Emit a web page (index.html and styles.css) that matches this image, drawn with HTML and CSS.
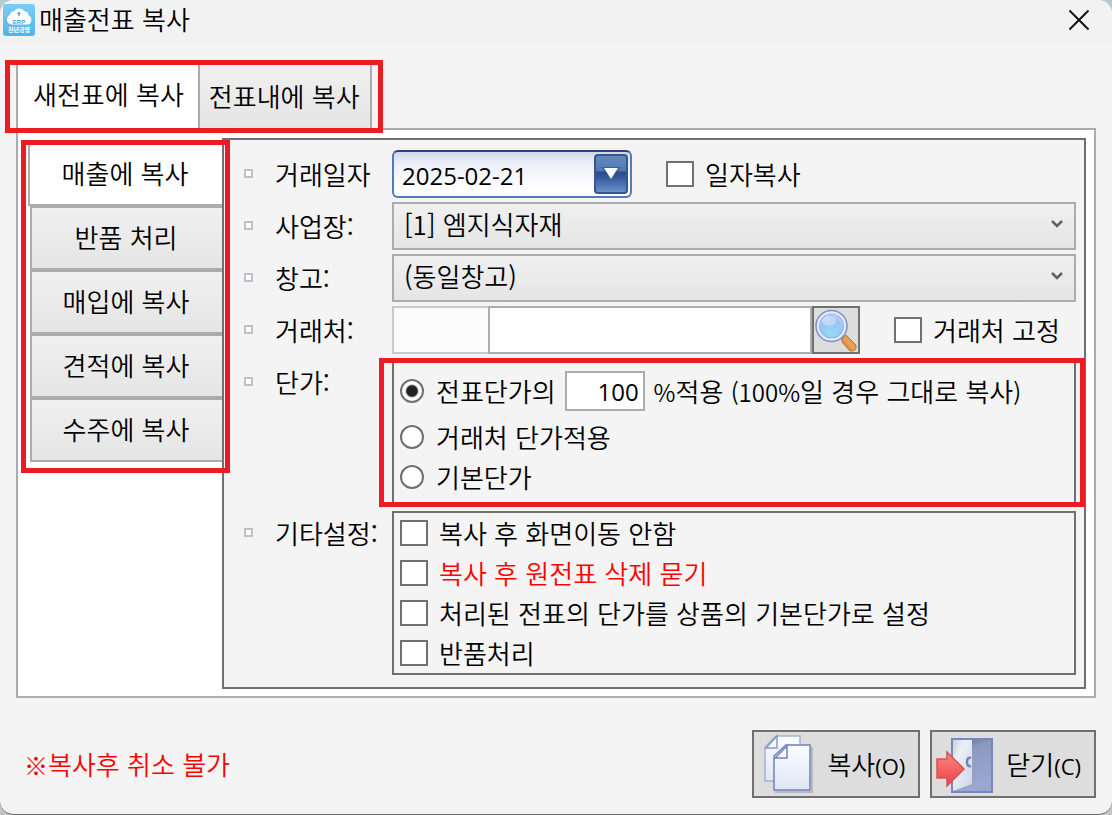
FILE: index.html
```html
<!DOCTYPE html>
<html lang="ko">
<head>
<meta charset="utf-8">
<title>매출전표 복사</title>
<link rel="stylesheet" href="styles.css">
</head>
<body>
<main class="window">
  <header class="titlebar">
    <svg class="app-icon" viewBox="0 0 32 32" aria-hidden="true">
      <defs>
        <linearGradient id="sky" x1="0" y1="0" x2="0" y2="1"><stop offset="0" stop-color="#7ccdf5"/><stop offset="1" stop-color="#55b2e8"/></linearGradient>
      </defs>
      <rect width="32" height="32" rx="3" fill="url(#sky)"/>
      <path d="M8 20.500a5 5 0 0 1-1-9.500 3.500 3.500 0 0 1 4-3.500 6 6 0 0 1 10.500 0 4 4 0 0 1 4 4 4.800 4.800 0 0 1-.5 9z" fill="#fff"/>
      <path d="M16 7.500l2 2.500h-1.300v2h-1.400v-2H14z" fill="#4a9ed6"/>
      <text x="16" y="19.500" class="logo-erp">ERP</text>
      <text x="16" y="27.500" class="logo-name">천년경영</text>
    </svg>
    <h1 class="title">매출전표 복사</h1>
    <button class="close" type="button" aria-label="닫기">
      <svg width="22" height="22" viewBox="0 0 22 22"><path d="M1.500 1.500l19 19M20.500 1.500l-19 19" stroke="#111" stroke-width="2" fill="none"/></svg>
    </button>
  </header>

  <div class="tabs marked" role="tablist">
    <button class="tab tab-active" type="button" role="tab" aria-selected="true">새전표에 복사</button>
    <button class="tab" type="button" role="tab" aria-selected="false">전표내에 복사</button>
  </div>

  <section class="panel">
    <div class="side">
      <div class="side-tabs marked" role="tablist">
        <button class="side-tab side-active" type="button" role="tab" aria-selected="true">매출에 복사</button>
        <button class="side-tab" type="button" role="tab" aria-selected="false">반품 처리</button>
        <button class="side-tab" type="button" role="tab" aria-selected="false">매입에 복사</button>
        <button class="side-tab" type="button" role="tab" aria-selected="false">견적에 복사</button>
        <button class="side-tab" type="button" role="tab" aria-selected="false">수주에 복사</button>
      </div>
    </div>

    <form class="form">
      <div class="row">
        <label class="name" for="date">거래일자</label>
        <div class="field">
          <div class="date">
            <input id="date" class="date-input" type="text" value="2025-02-21">
            <button class="date-button" type="button" aria-label="달력">
              <svg width="20" height="14" viewBox="0 0 20 14"><path d="M0 1h20l-4 5H4z" fill="#2f5596" opacity=".7"/><path d="M3 2h14l-7 11z" fill="#fff"/></svg>
            </button>
          </div>
          <label class="option date-copy"><input class="check" type="checkbox">일자복사</label>
        </div>
      </div>
      <div class="row">
        <label class="name" for="site">사업장:</label>
        <div class="field"><select id="site" class="select"><option>[1] 엠지식자재</option></select></div>
      </div>
      <div class="row">
        <label class="name" for="store">창고:</label>
        <div class="field"><select id="store" class="select"><option>(동일창고)</option></select></div>
      </div>
      <div class="row">
        <label class="name" for="client">거래처:</label>
        <div class="field">
          <input class="code" type="text" aria-label="거래처 코드" disabled>
          <input id="client" class="client" type="text">
          <button class="search" type="button" aria-label="거래처 찾기">
            <svg width="44" height="44" viewBox="0 0 44 44">
              <defs>
                <radialGradient id="glass" cx=".5" cy=".75" r=".75"><stop offset="0" stop-color="#8edcf8"/><stop offset=".6" stop-color="#9fc2f3"/><stop offset="1" stop-color="#c9d9f8"/></radialGradient>
                <linearGradient id="handle" x1="0" y1="1" x2="1" y2="0"><stop offset="0" stop-color="#a8622c"/><stop offset=".5" stop-color="#efa552"/><stop offset="1" stop-color="#c57a38"/></linearGradient>
              </defs>
              <path d="M26 27l4 4" stroke="#8d98b5" stroke-width="4"/>
              <path d="M28 31l4-4 10 10v4l-3 2h-3l-8-9z" fill="url(#handle)" stroke="#b57a45"/>
              <circle cx="17.500" cy="18" r="14" fill="url(#glass)" stroke="#7d93c6" stroke-width="4.500"/>
              <circle cx="17.500" cy="18" r="13.500" fill="none" stroke="#dfe9fb" stroke-width="2.500"/>
              <ellipse cx="15" cy="13" rx="7" ry="4.500" fill="#fff" opacity=".35"/>
            </svg>
          </button>
          <label class="option client-fix"><input class="check" type="checkbox">거래처 고정</label>
        </div>
      </div>
      <div class="row">
        <span class="name" id="price-name">단가:</span>
        <div class="group price marked" role="radiogroup" aria-labelledby="price-name">
          <div class="option percent-line">
            <label class="option"><input class="radio" type="radio" name="price" checked>전표단가의</label>
            <input id="percent" class="percent" type="text" value="100">
            <label for="percent"><span class="latin">%</span>적용 <span class="latin">(100%</span>일 경우 그대로 복사<span class="latin">)</span></label>
          </div>
          <label class="option"><input class="radio" type="radio" name="price">거래처 단가적용</label>
          <label class="option"><input class="radio" type="radio" name="price">기본단가</label>
        </div>
      </div>
      <div class="row row-etc">
        <span class="name" id="etc-name">기타설정:</span>
        <div class="group etc" role="group" aria-labelledby="etc-name">
          <label class="option"><input class="check" type="checkbox">복사 후 화면이동 안함</label>
          <label class="option warn"><input class="check" type="checkbox">복사 후 원전표 삭제 묻기</label>
          <label class="option"><input class="check" type="checkbox">처리된 전표의 단가를 상품의 기본단가로 설정</label>
          <label class="option"><input class="check" type="checkbox">반품처리</label>
        </div>
      </div>
    </form>
  </section>

  <footer class="footer">
    <p class="notice warn"><span class="mark">※</span>복사후 취소 불가</p>
    <button class="action copy" type="button">
      <svg width="52" height="60" viewBox="0 0 52 60" aria-hidden="true">
        <defs><linearGradient id="paper" x1="0" y1="0" x2="0" y2="1"><stop offset="0" stop-color="#fafcff"/><stop offset="1" stop-color="#dfe7f5"/></linearGradient></defs>
        <path d="M13 2h24v45H2V13z" fill="url(#paper)" stroke="#a5b1d0" stroke-width="1.500"/>
        <path d="M14 2v12H3z" fill="#f4f7fd" stroke="#8798c4" stroke-width="1.500"/>
        <path d="M12 58h37V13" fill="none" stroke="#b6b9c2" stroke-width="2"/>
        <path d="M23 11h24v45H11V22z" fill="url(#paper)" stroke="#7181b3" stroke-width="1.500"/>
        <path d="M24 12v12H12z" fill="#f4f7fd" stroke="#7184bb" stroke-width="1.500"/>
      </svg>
      <span>복사<span class="key">(O)</span></span>
    </button>
    <button class="action quit" type="button">
      <svg width="58" height="60" viewBox="0 0 58 60" aria-hidden="true">
        <defs>
          <linearGradient id="hall" x1="0" y1="0" x2=".3" y2="1"><stop offset="0" stop-color="#55617f"/><stop offset=".3" stop-color="#8c99bf"/><stop offset="1" stop-color="#9aa7cf"/></linearGradient>
          <linearGradient id="leaf" x1="0" y1="0" x2="1" y2="1"><stop offset="0" stop-color="#c9cedb"/><stop offset=".3" stop-color="#edf0f6"/><stop offset="1" stop-color="#cdd4e6"/></linearGradient>
          <linearGradient id="arrow" x1="0" y1="0" x2="0" y2="1"><stop offset="0" stop-color="#ff8585"/><stop offset="1" stop-color="#e64444"/></linearGradient>
        </defs>
        <path d="M17 5h40v53H17z" fill="url(#hall)" stroke="#7689bc" stroke-width="2"/>
        <path d="M18 6h19v44l-19 7z" fill="url(#leaf)"/>
        <path d="M36 24q-4-1-4 4t4 4" fill="none" stroke="#7286be" stroke-width="2.500"/>
        <path d="M2 25h10v-7l17 17-17 17v-8H2z" fill="url(#arrow)" stroke="#d85252" stroke-width="1.500"/>
      </svg>
      <span>닫기<span class="key">(C)</span></span>
    </button>
  </footer>
</main>
</body>
</html>
```
FILE: styles.css
```css
*,
*::before,
*::after {
  box-sizing: border-box;
}

body {
  margin: 0;
  background: linear-gradient(#b4cbd0, #c4c4c4);
  color: #000;
  font: 350 26px/40px "Noto Sans CJK KR", sans-serif;
}

button,
input,
select {
  margin: 0;
  padding: 0;
  border-radius: 0;
  color: inherit;
  font: inherit;
}

.window {
  display: flex;
  flex-direction: column;
  min-height: 100vh;
  overflow: hidden;
  border-bottom: 1px solid #6a6a6a;
  border-radius: 14px;
  background: #f4f4f4;
}

.titlebar {
  display: flex;
  align-items: center;
  height: 44px;
  padding: 0 22px 4px 3px;
  background: #f2f2f2;
}

.app-icon {
  width: 32px;
  height: 32px;
}

.logo-erp,
.logo-name {
  fill: #4a9ed6;
  font: 700 6px "Liberation Sans", sans-serif;
  text-anchor: middle;
}

.logo-name {
  fill: #fff;
  font: 700 6px "Noto Sans CJK KR", sans-serif;
}

.title {
  flex: 1;
  margin: 0 0 0 4px;
  padding-bottom: 2px;
  font: inherit;
}

.close {
  display: flex;
  border: 0;
  background: none;
}

/* Red callout frame drawn over a part of the window */
.marked {
  position: relative;
}

.marked::after {
  position: absolute;
  border: 5px solid #ed1c24;
  content: "";
  pointer-events: none;
}

.tabs {
  display: flex;
  align-self: flex-start;
  height: 66px;
  margin: 18px 0 0 16px;
}

.tabs::after {
  inset: -2px -11px -5px -11px;
}

.tab {
  padding: 0 10px 0 9px;
  border: 2px solid #acacac;
  border-width: 2px 2px 0 0;
  background: linear-gradient(#f0f0f0, #e5e5e5);
}

.tab-active {
  padding: 0 14px 4px 15px;
  border-left-width: 2px;
  background: #fff;
}

.panel {
  display: grid;
  grid-template-columns: 204px 1fr;
  margin: 0 16px;
  padding: 8px 8px 7px 0;
  border: 2px solid #acacac;
  background: #fff;
}

.side-tabs {
  display: flex;
  flex-direction: column;
  margin: 4px 0 0 10px;
}

.side-tabs::after {
  inset: -2px -8px -11px -7px;
}

.side-tab {
  height: 64px;
  margin-left: 2px;
  padding: 0 2px 2px 0;
  border: 2px solid #acacac;
  border-right: 0;
  background: linear-gradient(#f0f0f0, #e5e5e5);
}

.side-active {
  margin-left: 0;
  background: #fff;
}

.form {
  display: flex;
  flex-direction: column;
  gap: 4px;
  padding: 10px 8px 12px 20px;
  border: 2px solid #707070;
  background: #f4f4f4;
}

.row {
  display: grid;
  grid-template-columns: 148px 1fr;
  align-items: start;
}

.name {
  display: flex;
  align-items: center;
  gap: 22px;
  height: 48px;
  padding-bottom: 1px;
}

.name::before {
  width: 9px;
  height: 9px;
  border: 2px solid #bfc1c8;
  background: #fff;
  content: "";
}

.field {
  display: flex;
  height: 48px;
}

.option {
  display: flex;
  align-items: center;
  gap: 11px;
}

.date {
  display: flex;
  width: 240px;
  padding: 2px;
  border: 2px solid #5478b8;
  border-top-color: #2b4376;
  border-radius: 6px;
  background: linear-gradient(#cfd6e6, #eceff6 25%, #fff 85%);
}

.date-input {
  flex: 1;
  min-width: 0;
  padding: 2px 0 0 6px;
  border: 0;
  background: none;
  font: 24px "Open Sans", sans-serif;
}

.date-button {
  display: flex;
  justify-content: center;
  width: 34px;
  padding-top: 10px;
  border: 2px solid #355791;
  border-radius: 4px;
  background: linear-gradient(#6388bf, #5379b5 40%, #2c4c87 45%, #37599a 60%, #6b90cb);
}

.date-copy {
  margin-left: 34px;
}

.select {
  flex: 1;
  min-width: 0;
  padding: 0 32px 4px 10px;
  border: 2px solid #acacac;
  appearance: none;
  background:
    url("data:image/svg+xml,%3Csvg xmlns='http://www.w3.org/2000/svg' width='12' height='10'%3E%3Cpath d='M1 2l5 5 5-5' fill='none' stroke='%23606060' stroke-width='2.500'/%3E%3C/svg%3E") no-repeat right 11px top 15px,
    linear-gradient(#f0f0f0, #e5e5e5);
}

.code {
  width: 96px;
  border: 2px solid #c9cad0;
  border-right: 0;
  background: #fbfbfb;
}

.client {
  flex: 1;
  min-width: 0;
  border: 2px solid #abadb3;
}

.search {
  display: flex;
  width: 48px;
  border: 2px solid #707070;
  background: #ddd;
}

.client-fix {
  flex-basis: 182px;
  margin-left: 34px;
}

.check,
.radio {
  flex: none;
  width: 28px;
  height: 26px;
  border: 2px solid #707070;
  appearance: none;
  background: #fff;
}

.radio {
  width: 24px;
  height: 24px;
  border-radius: 50%;
}

.radio:checked {
  background: radial-gradient(circle, #222 0 5px, #fff 7px);
}

.group {
  padding: 0 6px;
  border: 2px solid #707070;
}

.price {
  padding-top: 5px;
  padding-bottom: 5px;
}

.price::after {
  inset: -2px -11px -5px -15px;
}

.price .option {
  gap: 12px;
}

.price .percent-line {
  gap: 9px;
  height: 52px;
}

.percent {
  width: 80px;
  height: 40px;
  padding-right: 4px;
  border: 2px solid #abadb3;
  background: #fff;
  font: 24px "Open Sans", sans-serif;
  text-align: right;
}

.latin {
  font-size: 24px;
}

.row-etc {
  margin-top: 3px;
}

.row-etc .name {
  height: 44px;
}

.warn {
  color: #f00;
}

.footer {
  display: flex;
  align-items: center;
  gap: 10px;
  margin-top: 32px;
  padding: 0 16px 16px 24px;
}

.notice {
  flex: 1;
  margin: 0;
}

.mark {
  font-size: 24px;
}

.action {
  display: flex;
  align-items: center;
  height: 68px;
  border: 2px solid #707070;
  background: #ddd;
}

.key {
  font: 22px "Open Sans", sans-serif;
}

.copy {
  gap: 12px;
  padding: 0 13px 0 9px;
}

.quit {
  gap: 13px;
  padding: 0 13px 0 3px;
}
```
